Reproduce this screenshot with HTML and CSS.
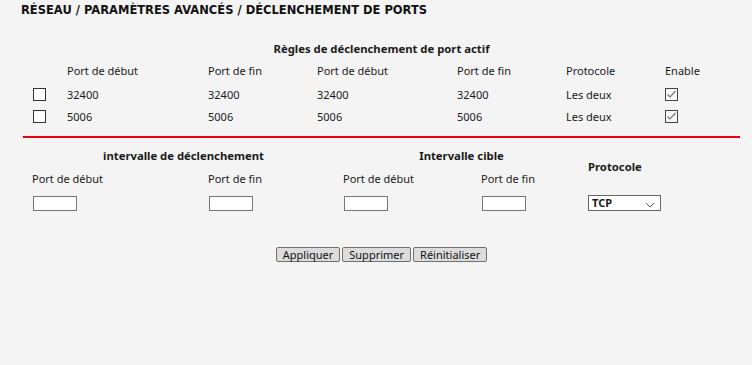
FILE: index.html
```html
<!DOCTYPE html>
<html lang="fr">

<head>
    <meta charset="UTF-8">
    <title>Déclenchement de ports</title>
    <link rel="stylesheet" href="styles.css">
</head>

<body>
    <div class="page">
        <h1 class="title">RÉSEAU / PARAMÈTRES AVANCÉS / DÉCLENCHEMENT DE PORTS</h1>

        <div class="rules">
            <div class="caption">Règles de déclenchement de port actif</div>
            <div class="grid head">
                <div></div>
                <div>Port de début</div>
                <div>Port de fin</div>
                <div>Port de début</div>
                <div>Port de fin</div>
                <div>Protocole</div>
                <div>Enable</div>
            </div>
            <div class="grid row">
                <div><span class="box"></span></div>
                <div>32400</div>
                <div>32400</div>
                <div>32400</div>
                <div>32400</div>
                <div>Les deux</div>
                <div><span class="box checked"><svg viewBox="0 0 13 13" width="13" height="13"><path d="M2.5 6.5 L5 9 L10.5 3" fill="none" stroke="#777" stroke-width="1.2"/></svg></span></div>
            </div>
            <div class="grid row">
                <div><span class="box"></span></div>
                <div>5006</div>
                <div>5006</div>
                <div>5006</div>
                <div>5006</div>
                <div>Les deux</div>
                <div><span class="box checked"><svg viewBox="0 0 13 13" width="13" height="13"><path d="M2.5 6.5 L5 9 L10.5 3" fill="none" stroke="#777" stroke-width="1.2"/></svg></span></div>
            </div>
        </div>

        <div class="divider"></div>

        <div class="form">
            <div class="sub sub1">intervalle de déclenchement</div>
            <div class="sub sub2">Intervalle cible</div>
            <div class="sub proto">Protocole</div>
            <div class="lbl">Port de début</div>
            <div class="lbl">Port de fin</div>
            <div class="lbl">Port de début</div>
            <div class="lbl">Port de fin</div>
            <div><input type="text" class="field"></div>
            <div><input type="text" class="field"></div>
            <div><input type="text" class="field"></div>
            <div><input type="text" class="field"></div>
            <div>
                <div class="select">
                    <span>TCP</span>
                    <svg class="chev" viewBox="0 0 10 6" width="10" height="6"><path d="M1 1 L5 5 L9 1" fill="none" stroke="#555" stroke-width="1"/></svg>
                </div>
            </div>
        </div>

        <div class="buttons">
            <button class="btn">Appliquer</button>
            <button class="btn">Supprimer</button>
            <button class="btn">Réinitialiser</button>
        </div>
    </div>
</body>

</html>
```

FILE: styles.css
```css
* {
    margin: 0;
    padding: 0;
    box-sizing: border-box;
}

body {
    background-color: #f4f4f4;
    color: #1a1a1a;
    font-family: "Noto Sans", "DejaVu Sans", sans-serif;
    font-size: 11px;
}

.page {
    padding: 2px 12px 0 23px;
}

.title {
    font-family: "DejaVu Sans", sans-serif;
    font-size: 11.5px;
    font-weight: bold;
    line-height: 16px;
    margin-left: -2px;
    color: #111;
}

.rules {
    margin-top: 23px;
}

.caption {
    text-align: center;
    font-weight: bold;
    font-size: 11.3px;
    line-height: 16px;
}

.grid {
    display: grid;
    grid-template-columns: 44px 141px 109px 140px 109px 99px 1fr;
    align-items: center;
}

.head {
    height: 23px;
    margin-top: 2px;
}

.row {
    height: 22px;
    padding-top: 2px;
}

.box {
    display: block;
    width: 13px;
    height: 13px;
    margin-left: 10px;
    border: 1px solid #333;
    background-color: #fff;
}

.box.checked {
    margin-left: 0;
    border-color: #444;
    background-color: #f7f7f7;
}

.box svg {
    display: block;
    margin: -1px 0 0 -1px;
}

.divider {
    margin-top: 10px;
    height: 2px;
    background-color: #e2001a;
}

.form {
    display: grid;
    grid-template-columns: 176px 135px 138px 107px 1fr;
    grid-template-rows: 23px 22px 28px;
    padding-left: 9px;
    margin-top: 6px;
    align-items: center;
}

.sub {
    font-weight: bold;
    font-size: 11.3px;
    text-align: center;
}

.sub1 {
    grid-column: 1 / 3;
    padding-right: 8px;
}

.sub2 {
    grid-column: 3 / 5;
    padding-right: 8px;
}

.proto {
    grid-column: 5;
    grid-row: 1 / 3;
    text-align: left;
}

.field {
    display: block;
    width: 44px;
    height: 15px;
    margin-left: 1px;
    border: 1px solid #777;
    background-color: #fff;
}

.select {
    position: relative;
    width: 73px;
    height: 16px;
    border: 1px solid #666;
    background-color: #fff;
    font-weight: bold;
    line-height: 14px;
    padding-left: 3px;
}

.chev {
    position: absolute;
    right: 5px;
    top: 6px;
}

.buttons {
    display: flex;
    justify-content: center;
    gap: 2px;
    margin-top: 30px;
}

.btn {
    font-family: "Noto Sans", sans-serif;
    font-size: 11px;
    height: 15px;
    line-height: 12px;
    padding: 0 6px;
    background-color: #dcdcdc;
    border: 1px solid #707070;
    border-radius: 2px;
    color: #111;
}
```
